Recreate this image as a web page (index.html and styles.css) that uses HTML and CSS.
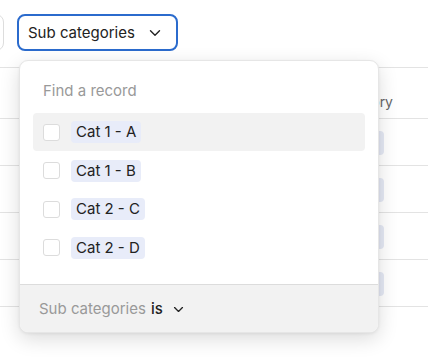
FILE: index.html
```html
<!DOCTYPE html>
<html lang="en">
<head>
    <meta charset="UTF-8">
    <meta name="viewport" content="width=device-width, initial-scale=1.0">
    <title>Sub categories filter</title>
    <link rel="stylesheet" href="styles.css">
</head>
<body>
    <div class="toolbar">
        <button class="tool-btn prev" type="button" aria-label="Category"></button>
        <button class="tool-btn active" type="button">
            Sub categories
            <svg class="chev" width="12" height="8" viewBox="0 0 12 8"><path d="M1.5 1.8 6 6.2l4.5-4.4" fill="none" stroke="#222" stroke-width="1.4" stroke-linecap="round" stroke-linejoin="round"/></svg>
        </button>
    </div>

    <div class="grid">
        <div class="row head">
            <div class="cell-cat">Sub category</div>
        </div>
        <div class="row"><div class="cell-cat"><span class="pill">Cat 1 - A</span></div></div>
        <div class="row"><div class="cell-cat"><span class="pill">Cat 1 - B</span></div></div>
        <div class="row"><div class="cell-cat"><span class="pill">Cat 2 - C</span></div></div>
        <div class="row"><div class="cell-cat"><span class="pill">Cat 2 - D</span></div></div>
    </div>

    <div class="dropdown">
        <div class="search">
            <input type="text" placeholder="Find a record">
        </div>
        <ul class="options">
            <li class="option hover"><span class="check"></span><span class="tag">Cat 1 - A</span></li>
            <li class="option"><span class="check"></span><span class="tag">Cat 1 - B</span></li>
            <li class="option"><span class="check"></span><span class="tag">Cat 2 - C</span></li>
            <li class="option"><span class="check"></span><span class="tag">Cat 2 - D</span></li>
        </ul>
        <div class="footer">
            <span class="field">Sub categories</span>
            <span class="op">is</span>
            <svg class="chev" width="11" height="7" viewBox="0 0 12 8"><path d="M1.5 1.8 6 6.2l4.5-4.4" fill="none" stroke="#222" stroke-width="1.5" stroke-linecap="round" stroke-linejoin="round"/></svg>
        </div>
    </div>
</body>
</html>
```

FILE: styles.css
```css
body{
    margin: 0;
    padding: 0;
    background-color: #fff;
    font-family: Inter, "Noto Sans", sans-serif;
    color: #222;
    overflow: hidden;
    position: relative;
    width: 428px;
    height: 361px;
}

.toolbar{
    display: flex;
    gap: 13px;
    padding-top: 14px;
    margin-left: -96px;
}
.tool-btn{
    font-family: inherit;
    font-size: 15px;
    color: #222;
    background: #fff;
    height: 37px;
    border-radius: 8px;
    display: flex;
    align-items: center;
}
.tool-btn.prev{
    width: 100px;
    border: 1px solid #ddd;
}
.tool-btn.active{
    width: 161px;
    border: 2px solid #2b6bcd;
    padding: 0 0 0 9px;
    gap: 14px;
}
.tool-btn .chev{
    margin-top: 1px;
}

/* table behind the popup */
.grid{
    margin-top: 16px;
    font-size: 14px;
    color: #666;
    border-bottom: 1px solid #e3e3e3;
}
.row{
    box-sizing: border-box;
    height: 47px;
    border-top: 1px solid #e3e3e3;
    display: flex;
    align-items: center;
    justify-content: flex-end;
}
.row.head{
    height: 51px;
    align-items: flex-end;
    padding-bottom: 8px;
}
.head .cell-cat{
    margin-right: 35px;
    line-height: 17px;
}
.cell-cat{
    margin-right: 44px;
}
.pill{
    display: block;
    background: #e4e8f4;
    border-radius: 4px;
    height: 24px;
    width: 70px;
    color: transparent;
    overflow: hidden;
    margin-top: 1px;
}

/* popup over the table */
.dropdown{
    position: absolute;
    left: 19px;
    top: 60px;
    width: 360px;
    height: 273px;
    background: #fff;
    border: 1px solid #e6e6e6;
    box-sizing: border-box;
    border-radius: 9px;
    box-shadow: 0 6px 20px rgba(0, 0, 0, 0.14), 0 1px 3px rgba(0, 0, 0, 0.06);
    display: flex;
    flex-direction: column;
    overflow: hidden;
}
.search{
    padding: 18px 23px 0 23px;
}
.search input{
    border: none;
    outline: none;
    font-family: inherit;
    font-size: 15px;
    width: 100%;
    padding: 0;
    height: 22px;
}
.search input::placeholder{
    color: #999;
}
.options{
    list-style: none;
    margin: 12px 0 0 0;
    padding: 0 13px;
}
.option{
    display: flex;
    align-items: center;
    height: 38px;
    padding-left: 10px;
    gap: 11px;
    border-radius: 4px;
    margin-bottom: 0.5px;
}
.option.hover{
    background: #f2f2f2;
}
.check{
    width: 15px;
    height: 15px;
    border: 1.5px solid #dcdcdc;
    border-radius: 3px;
    background: #fff;
}
.tag{
    font-size: 15px;
    color: #222;
    background: #e8ecf9;
    border-radius: 4px;
    padding: 1px 5px;
    line-height: 20px;
}
.footer{
    margin-top: auto;
    height: 47px;
    background: #f2f2f2;
    border-top: 1px solid #dcdcdc;
    display: flex;
    align-items: center;
    padding-left: 19px;
    font-size: 15px;
    gap: 5px;
}
.footer .field{
    color: #999;
}
.footer .op{
    color: #222;
    font-weight: 500;
}
.footer .chev{
    margin-left: 5px;
    margin-top: 1px;
}
```
